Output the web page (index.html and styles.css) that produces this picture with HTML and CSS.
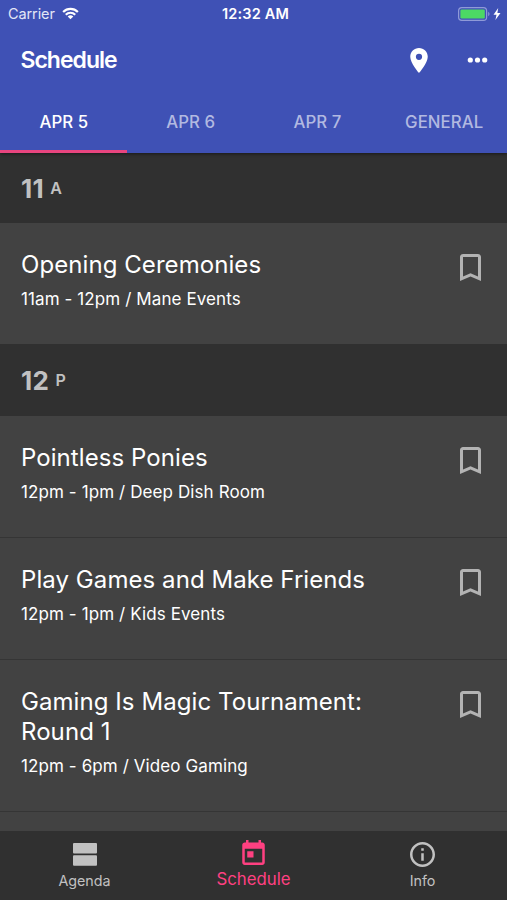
FILE: index.html
```html
<!DOCTYPE html>
<html lang="en">
<head>
  <meta charset="UTF-8" />
  <meta name="viewport" content="width=device-width, initial-scale=1.0" />
  <title>Schedule</title>
  <link rel="stylesheet" href="styles.css">
</head>
<body>
  <div class="app">
    <header class="app-header">
      <!-- Status bar -->
      <div class="status-bar">
        <div class="status-left">
          <span class="carrier">Carrier</span>
          <svg class="wifi" viewBox="0 0 18 13">
            <path d="M1.2 4.9a11 11 0 0 1 15.6 0M4 7.8a7.1 7.1 0 0 1 10 0" fill="none" stroke="#fff" stroke-width="2.3"/>
            <path d="M9 12.7L6 9.7a4.3 4.3 0 0 1 6 0z" fill="#fff"/>
          </svg>
        </div>
        <span class="clock">12:32 AM</span>
        <div class="status-right">
          <svg class="battery" viewBox="0 0 33 14">
            <rect x="0.6" y="0.6" width="28" height="12.8" rx="3.2" fill="none" stroke="#8f9ad8" stroke-width="1.2"/>
            <rect x="2.4" y="2.4" width="24.4" height="9.2" rx="1.4" fill="#4cd964"/>
            <path d="M30.2 4.8c1.8.7 1.8 3.7 0 4.4z" fill="#8f9ad8"/>
          </svg>
          <svg class="bolt" viewBox="0 0 8 12">
            <path d="M5.2 0L0.5 6.8h3L2.4 12 7.5 5H4.4z" fill="#fff"/>
          </svg>
        </div>
      </div>
      <!-- Toolbar -->
      <div class="toolbar">
        <h1>Schedule</h1>
        <div class="toolbar-actions">
          <svg class="icon-pin" viewBox="5 2 14 20">
            <path d="M12 2C8.13 2 5 5.13 5 9c0 5.25 7 13 7 13s7-7.75 7-13c0-3.87-3.13-7-7-7zm0 9.5a2.5 2.5 0 0 1 0-5 2.5 2.5 0 0 1 0 5z" fill="#fff"/>
          </svg>
          <svg class="icon-more" viewBox="0 0 20 6">
            <circle cx="2.8" cy="3" r="2.6" fill="#fff"/>
            <circle cx="10" cy="3" r="2.6" fill="#fff"/>
            <circle cx="17.2" cy="3" r="2.6" fill="#fff"/>
          </svg>
        </div>
      </div>
      <!-- Day tabs -->
      <nav class="day-tabs">
        <div class="day-tab active">APR 5</div>
        <div class="day-tab">APR 6</div>
        <div class="day-tab">APR 7</div>
        <div class="day-tab">GENERAL</div>
      </nav>
    </header>

    <main class="schedule">
      <div class="hour-header first"><span class="hour">11</span><span class="period">A</span></div>
      <div class="event">
        <div class="event-info">
          <h2>Opening Ceremonies</h2>
          <p>11am - 12pm / Mane Events</p>
        </div>
        <svg class="bookmark" viewBox="5 3 14 18"><path d="M17 3H7c-1.1 0-2 .9-2 2v16l7-3 7 3V5c0-1.1-.9-2-2-2zm0 15l-5-2.18L7 18V5h10z"/></svg>
      </div>
      <div class="hour-header"><span class="hour">12</span><span class="period">P</span></div>
      <div class="event">
        <div class="event-info">
          <h2>Pointless Ponies</h2>
          <p>12pm - 1pm / Deep Dish Room</p>
        </div>
        <svg class="bookmark" viewBox="5 3 14 18"><path d="M17 3H7c-1.1 0-2 .9-2 2v16l7-3 7 3V5c0-1.1-.9-2-2-2zm0 15l-5-2.18L7 18V5h10z"/></svg>
      </div>
      <div class="event">
        <div class="event-info">
          <h2>Play Games and Make Friends</h2>
          <p>12pm - 1pm / Kids Events</p>
        </div>
        <svg class="bookmark" viewBox="5 3 14 18"><path d="M17 3H7c-1.1 0-2 .9-2 2v16l7-3 7 3V5c0-1.1-.9-2-2-2zm0 15l-5-2.18L7 18V5h10z"/></svg>
      </div>
      <div class="event">
        <div class="event-info">
          <h2>Gaming Is Magic Tournament: Round 1</h2>
          <p>12pm - 6pm / Video Gaming</p>
        </div>
        <svg class="bookmark" viewBox="5 3 14 18"><path d="M17 3H7c-1.1 0-2 .9-2 2v16l7-3 7 3V5c0-1.1-.9-2-2-2zm0 15l-5-2.18L7 18V5h10z"/></svg>
      </div>
      <div class="event"></div>
    </main>

    <!-- Bottom navigation -->
    <nav class="bottom-nav">
      <div class="nav-item">
        <svg class="icon-agenda" viewBox="0 0 24 23">
          <rect width="24" height="10.5" rx="1"/>
          <rect y="12.3" width="24" height="10.5" rx="1"/>
        </svg>
        <span>Agenda</span>
      </div>
      <div class="nav-item active">
        <svg class="icon-calendar" viewBox="3 1 18 20">
          <path d="M19 3h-1V1h-2v2H8V1H6v2H5c-1.11 0-2 .9-2 2v14c0 1.1.89 2 2 2h14c1.1 0 2-.9 2-2V5c0-1.1-.9-2-2-2zm0 16H5V8h14zM7 10h5v5H7z"/>
        </svg>
        <span>Schedule</span>
      </div>
      <div class="nav-item">
        <svg class="icon-info" viewBox="2 2 20 20">
          <path d="M11 17h2v-6h-2zm1-15C6.48 2 2 6.48 2 12s4.48 10 10 10 10-4.48 10-10S17.52 2 12 2zm0 18c-4.41 0-8-3.59-8-8s3.59-8 8-8 8 3.59 8 8-3.59 8-8 8zM11 9h2V7h-2z"/>
        </svg>
        <span>Info</span>
      </div>
    </nav>
  </div>
</body>
</html>
```
FILE: styles.css
```css
/* RESET & BASE STYLES */
* {
  margin: 0;
  padding: 0;
  box-sizing: border-box;
}
body {
  font-family: Inter, Roboto, sans-serif;
  background: #303030;
  color: #fff;
}
svg {
  display: block;
  flex-shrink: 0;
}
.app {
  display: flex;
  flex-direction: column;
  height: 900px;
  overflow: hidden;
}
/* HEADER */
.app-header {
  height: 153px;
  flex-shrink: 0;
  background: #3f51b5;
  box-shadow: 0 1px 3px rgba(0,0,0,0.5);
  z-index: 1;
}
.status-bar {
  display: grid;
  grid-template-columns: 1fr auto 1fr;
  align-items: center;
  height: 27px;
  padding: 0 6px 0 8px;
}
.status-left, .status-right {
  display: flex;
  align-items: center;
}
.status-left {
  gap: 7px;
}
.carrier {
  font-size: 14.5px;
  letter-spacing: -0.1px;
  color: #e3e6f5;
}
.wifi {
  width: 17px;
  height: 13px;
}
.clock {
  padding-left: 2px;
  font-weight: 600;
  font-size: 14.5px;
  letter-spacing: 0.15px;
}
.status-right {
  justify-content: flex-end;
  gap: 2px;
}
.battery {
  width: 33px;
  height: 14px;
}
.bolt {
  width: 8px;
  height: 12px;
}
.toolbar {
  display: flex;
  justify-content: space-between;
  align-items: center;
  height: 66px;
  padding: 0 19px 0 20.5px;
}
h1 {
  font-size: 23px;
  font-weight: 600;
  letter-spacing: -1px;
}
.toolbar-actions {
  display: flex;
  align-items: center;
  gap: 39px;
}
.icon-pin {
  width: 18px;
  height: 25px;
}
.icon-more {
  width: 21px;
  height: 6px;
}
/* DAY TABS */
.day-tabs {
  display: grid;
  grid-template-columns: repeat(4, 1fr);
  height: 60px;
}
.day-tab {
  display: flex;
  justify-content: center;
  align-items: center;
  padding-left: 1px;
  border-bottom: 3px solid transparent;
  font-size: 16.8px;
  font-weight: 500;
  letter-spacing: 0.05px;
  color: #b2b9e1;
}
.day-tab.active {
  color: #fff;
  border-bottom-color: #e8457f;
}
/* SCHEDULE LIST */
.schedule {
  flex: 1;
  min-height: 0;
  overflow: hidden;
}
.hour-header {
  display: flex;
  align-items: center;
  gap: 6px;
  height: 72px;
  padding: 0 21px;
  color: #c1c1c1;
}
.hour-header.first {
  height: 70px;
}
.hour {
  font-size: 26px;
  font-weight: 700;
  letter-spacing: 0.4px;
}
.period {
  font-size: 16px;
  font-weight: 600;
}
.event {
  display: flex;
  justify-content: space-between;
  align-items: flex-start;
  padding: 27px 26px 33px 21px;
  background: #424242;
}
.event + .event {
  border-top: 1px solid #353535;
}
.event-info {
  width: 380px;
}
h2 {
  font-size: 24px;
  font-weight: 400;
  line-height: 30px;
  letter-spacing: 0.07px;
}
p {
  margin-top: 7px;
  font-size: 17px;
  line-height: 24px;
  letter-spacing: 0.1px;
}
.bookmark {
  width: 21px;
  height: 27px;
  margin-top: 4px;
  fill: #b3b3b3;
}
/* BOTTOM NAVIGATION */
.bottom-nav {
  display: grid;
  grid-template-columns: repeat(3, 1fr);
  height: 69px;
  flex-shrink: 0;
  background: #303030;
}
.nav-item {
  display: flex;
  flex-direction: column;
  align-items: center;
  padding-top: 12px;
  font-size: 14.3px;
  color: #c1c1c1;
  fill: #c1c1c1;
}
.nav-item.active {
  padding-top: 9px;
  font-size: 16.8px;
  color: #ff4081;
  fill: #ff4081;
}
.icon-agenda {
  width: 24px;
  height: 23px;
  margin-bottom: 6px;
}
.icon-calendar {
  width: 23px;
  height: 25px;
  margin-bottom: 4px;
}
.icon-info {
  width: 25px;
  height: 25px;
  margin: -1px 0 5px;
}
```
